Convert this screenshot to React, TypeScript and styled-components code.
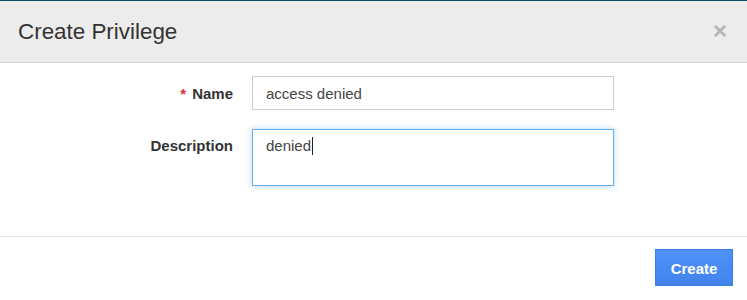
import React from "react";
import styled, { createGlobalStyle } from "styled-components";

const Global = createGlobalStyle`
  html, body { margin: 0; padding: 0; background: #ffffff; }
  body { font-family: "Liberation Sans", Arial, sans-serif; }
`;

const Modal = styled.div`
  width: 747px;
  height: 300px;
  border-top: 1px solid #0f4a5f;
  box-sizing: border-box;
  display: flex;
  flex-direction: column;
  background: #fff;
`;

const Header = styled.div`
  height: 62px;
  box-sizing: border-box;
  background: #ececec;
  border-bottom: 1px solid #d2d2d2;
  display: flex;
  align-items: center;
  justify-content: space-between;
  padding: 0 20px 0 18px;
`;

const Title = styled.h3`
  margin: 0;
  font-size: 22.4px;
  font-weight: 400;
  color: #333;
`;

const Close = styled.span`
  font-size: 24px;
  font-weight: 700;
  color: #b4b4b4;
  line-height: 1;
  margin-top: -2px;
`;

const Body = styled.div`
  height: 174px;
  box-sizing: border-box;
  padding-top: 13px;
  border-bottom: 1px solid #e5e5e5;
`;

const Form = styled.div`
  display: grid;
  grid-template-columns: 233px 362px;
  column-gap: 19px;
  row-gap: 19px;
`;

const Label = styled.label<{ $top: number }>`
  justify-self: end;
  font-size: 15px;
  font-weight: 700;
  color: #333;
  padding-top: ${(p) => p.$top}px;
`;

const Star = styled.span`
  color: #d9302a;
  margin-right: 6px;
  font-weight: 700;
`;

const Input = styled.div`
  height: 34px;
  box-sizing: border-box;
  border: 1px solid #cccccc;
  padding: 0 13px;
  display: flex;
  align-items: center;
  font-size: 15px;
  color: #444;
`;

const TextArea = styled.div`
  height: 57px;
  box-sizing: border-box;
  border: 1px solid #66afe9;
  box-shadow: 0 0 6px rgba(102, 175, 233, 0.5);
  padding: 7px 13px;
  font-size: 15px;
  color: #444;
  line-height: 18px;
`;

const Caret = styled.span`
  display: inline-block;
  width: 1px;
  height: 18px;
  background: #222;
  vertical-align: top;
  margin-left: 1px;
`;

const Footer = styled.div`
  flex: 1;
  display: flex;
  justify-content: flex-end;
  align-items: flex-start;
  padding: 12px 14px 0 0;
`;

const Button = styled.button`
  width: 78px;
  height: 37px;
  border: 1px solid #3b7fe3;
  background: linear-gradient(#4f91f8, #4283ec);
  color: #fff;
  font-family: "Liberation Sans", Arial, sans-serif;
  font-size: 15px;
  font-weight: 700;
  padding: 1px 0 0;
  cursor: pointer;
`;

export default function App() {
  return (
    <>
      <Global />
      <Modal>
        <Header>
          <Title>Create Privilege</Title>
          <Close>×</Close>
        </Header>
        <Body>
          <Form>
            <Label $top={9}>
              <Star>*</Star>Name
            </Label>
            <Input>access denied</Input>
            <Label $top={8}>Description</Label>
            <TextArea>
              denied
              <Caret />
            </TextArea>
          </Form>
        </Body>
        <Footer>
          <Button>Create</Button>
        </Footer>
      </Modal>
    </>
  );
}
